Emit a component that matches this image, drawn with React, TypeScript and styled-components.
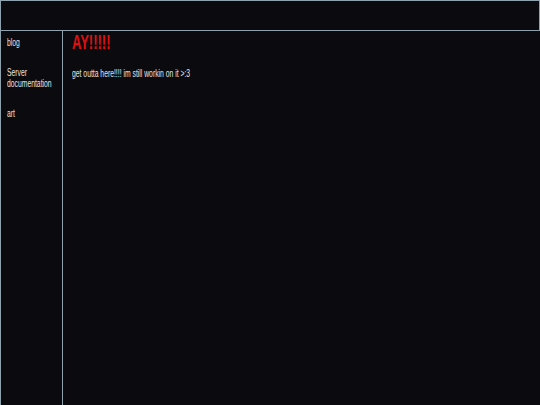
import React from 'react';
import styled, { createGlobalStyle } from 'styled-components';

const GlobalStyle = createGlobalStyle`
  html, body {
    margin: 0;
    padding: 0;
    background: #0a0a0f;
    height: 100%;
  }
  #root {
    height: 100%;
  }
`;

const Page = styled.div`
  height: 405px;
  display: flex;
  flex-direction: column;
  font-family: 'Liberation Sans', Arial, sans-serif;
  color: #e6e6e6;
  background: #0a0a0f;
`;

const Header = styled.header`
  height: 29px;
  border: 1px solid #8fa2ae;
  flex-shrink: 0;
`;

const Body = styled.div`
  flex: 1;
  display: flex;
  min-height: 0;
`;

const Sidebar = styled.nav`
  width: 63px;
  flex-shrink: 0;
  box-sizing: border-box;
  border-left: 1px solid #8fa2ae;
  border-right: 1px solid #8fa2ae;
  padding: 6px 0 0 6px;
  display: flex;
  flex-direction: column;
  align-items: flex-start;
  gap: 19px;
`;

/* the reference uses a tall, condensed face; squeeze Liberation Sans to match */
const Narrow = styled.span`
  display: inline-block;
  white-space: nowrap;
  transform: scaleX(0.63);
  transform-origin: left center;
`;

const NavLink = styled.a`
  color: #e6e6e6;
  text-decoration: none;
  font-size: 10.8px;
  line-height: 11px;
  display: flex;
  flex-direction: column;
`;

const Main = styled.main`
  flex: 1;
  padding: 1px 0 0 9px;
`;

const Title = styled.h1`
  margin: 0;
  color: #e01010;
  font-size: 20px;
  line-height: 20px;
  font-weight: bold;
  & > span {
    transform: scaleX(0.65);
  }
`;

const Text = styled.p`
  margin: 16px 0 0;
  font-size: 10.8px;
  line-height: 11px;
`;

export default function App() {
  return (
    <>
      <GlobalStyle />
      <Page>
        <Header />
        <Body>
          <Sidebar>
            <NavLink href="#"><Narrow>blog</Narrow></NavLink>
            <NavLink href="#">
              <Narrow>Server</Narrow>
              <Narrow>documentation</Narrow>
            </NavLink>
            <NavLink href="#"><Narrow>art</Narrow></NavLink>
          </Sidebar>
          <Main>
            <Title><Narrow>AY!!!!!</Narrow></Title>
            <Text><Narrow>get outta here!!!! im still workin on it &gt;:3</Narrow></Text>
          </Main>
        </Body>
      </Page>
    </>
  );
}
